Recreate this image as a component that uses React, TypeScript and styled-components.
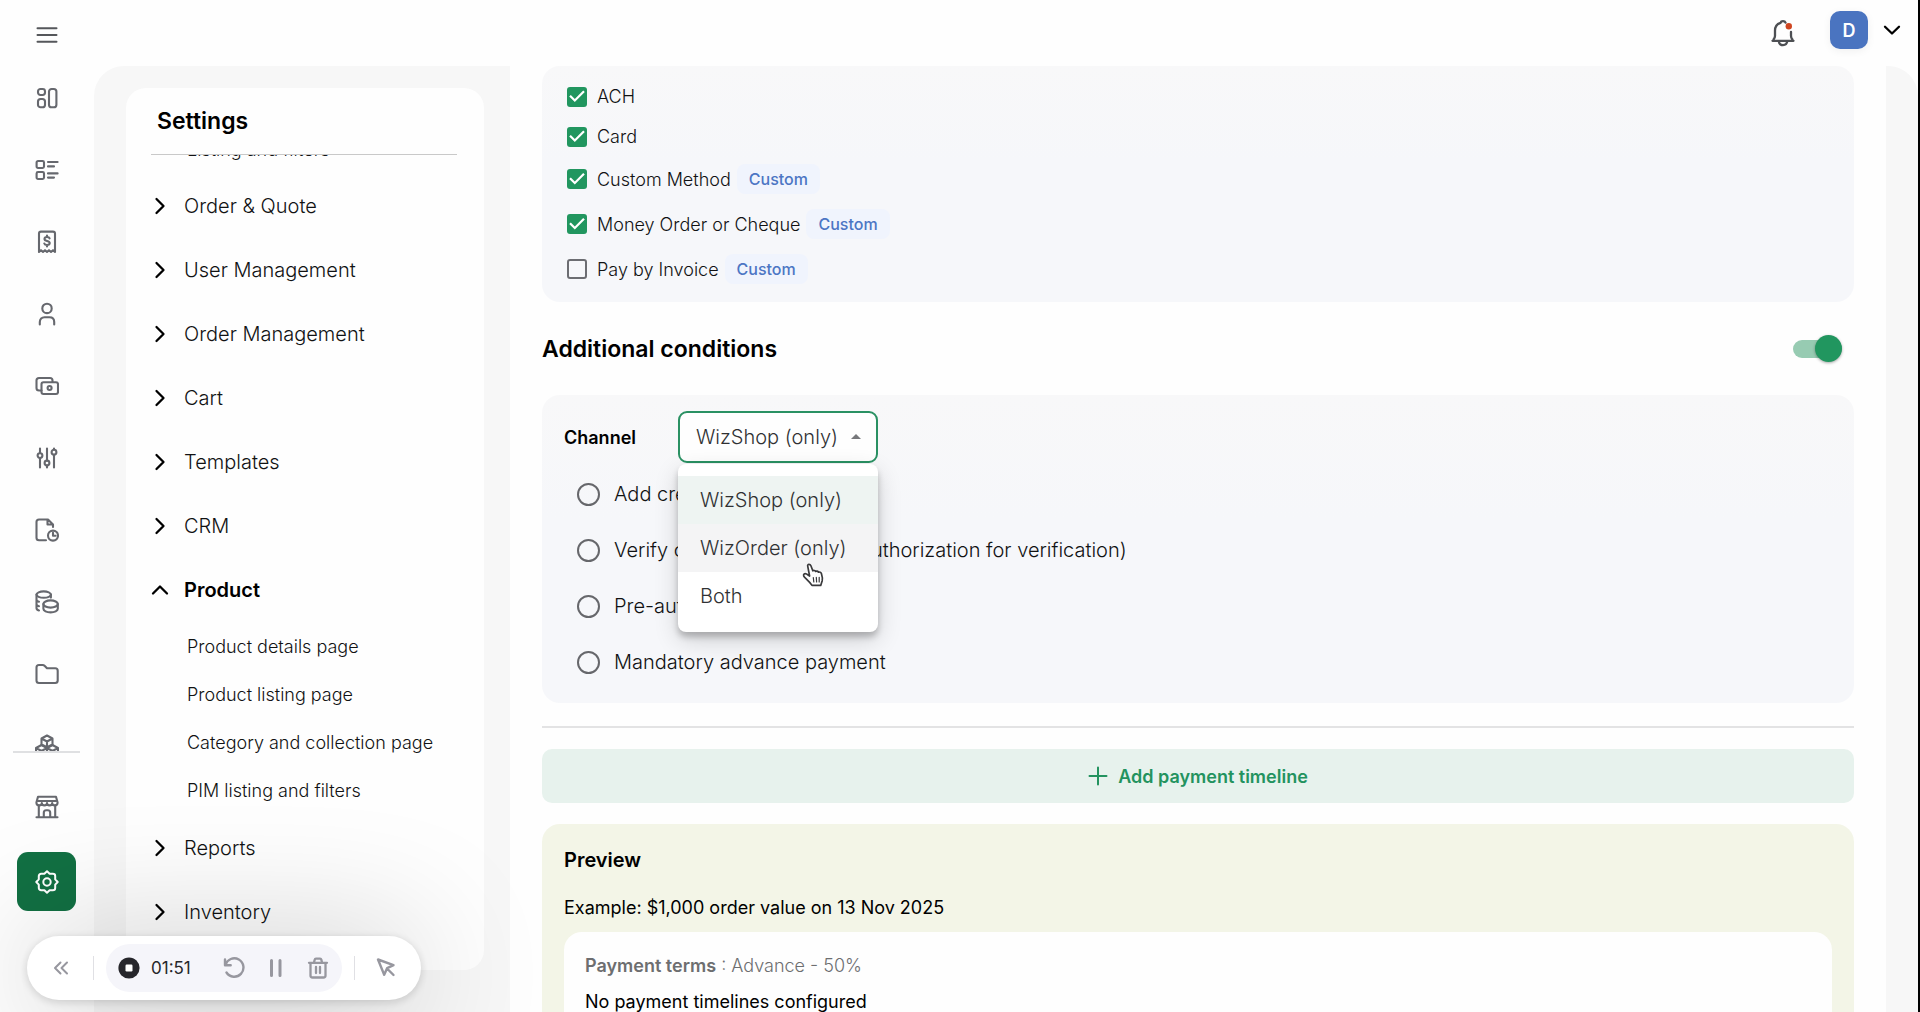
import React, { useLayoutEffect, useRef, useState } from "react";
import styled, { createGlobalStyle, css } from "styled-components";

const ink = "#111213";
const green = "#21965f";
const iconGrey = "#66686e";

const GlobalStyle = createGlobalStyle`
  *, *::before, *::after { box-sizing: border-box; }
  body {
    margin: 0;
    background: #fff;
    color: ${ink};
    font-family: Inter, "Liberation Sans", sans-serif;
    font-weight: 300;
    font-size: 18px;
  }
  button, select, input { font: inherit; color: inherit; }
  button { border: 0; padding: 0; background: none; cursor: pointer; }
  ul { list-style: none; margin: 0; padding: 0; }
  h1, h2, h3, p { margin: 0; }
`;

const Shell = styled.div`
  display: grid;
  grid-template-columns: 94px minmax(0, 1fr);
  height: 100vh;
  overflow: hidden;
  border-right: 2px solid #000;
  background: #fefefe;
`;

/* ---------- icon rail ---------- */

const Rail = styled.nav`
  display: flex;
  flex-direction: column;
  align-items: center;
  min-height: 0;
  padding-right: 1px;
`;

const RailButton = styled.button<{ $height: number }>`
  display: flex;
  flex: none;
  align-items: center;
  justify-content: center;
  width: 59px;
  height: ${(p) => p.$height}px;
  color: ${iconGrey};
`;

const MenuButton = styled(RailButton)`
  padding-top: 8px;
  color: #55575b;
`;

const RailList = styled.div`
  display: flex;
  flex-direction: column;
  flex: 1;
  min-height: 0;
  overflow: hidden;
`;

const RailFooter = styled.div`
  display: flex;
  flex-direction: column;
  align-items: center;
  gap: 9px;
  width: 67px;
  padding: 18px 0 101px;
  border-top: 2px solid #dfe0e2;
`;

const ActiveRailButton = styled(RailButton)`
  border-radius: 11px;
  background: #127043;
  color: #fff;
`;

/* ---------- top bar ---------- */

const Column = styled.div`
  display: flex;
  flex-direction: column;
  min-width: 0;
  min-height: 0;
`;

const TopBar = styled.header`
  display: flex;
  flex: none;
  align-items: center;
  justify-content: flex-end;
  height: 66px;
  padding: 0 16px 6px 0;
`;

const BellButton = styled.button`
  display: flex;
  margin-right: 32px;
  padding-top: 7px;
  color: #4d4f53;
`;

const Avatar = styled.span`
  display: grid;
  place-items: center;
  width: 38px;
  height: 38px;
  border-radius: 10px;
  background: #4a74c0;
  color: #fff;
  font-size: 18px;
  font-weight: 600;
  box-shadow: 0 2px 8px rgba(0, 0, 0, 0.06);
`;

const ProfileButton = styled.button`
  display: flex;
  align-items: center;
  gap: 14px;
  color: #000;
`;

const Workspace = styled.div`
  display: grid;
  grid-template-columns: 416px minmax(0, 1fr);
  flex: 1;
  min-height: 0;
  padding-right: 32px;
  border-radius: 30px 30px 0 0;
  overflow: hidden;
  background: #f7f7f7;
`;

/* ---------- settings panel ---------- */

const Panel = styled.aside`
  display: flex;
  flex-direction: column;
  min-height: 0;
  margin: 22px 26px 42px 32px;
  padding: 0 27px 0 25px;
  border-radius: 20px;
  background: #fefefe;
`;

const PanelTitle = styled.h1`
  flex: none;
  height: 67px;
  padding: 0 6px;
  border-bottom: 1px solid #c9c9c9;
  color: #000;
  font-size: 23px;
  font-weight: 600;
  line-height: 66px;
`;

const PanelScroll = styled.div`
  flex: 1;
  min-height: 0;
  overflow: hidden;
`;

const GroupList = styled.ul`
  padding-bottom: 96px;
`;

const GroupButton = styled.button<{ $open?: boolean }>`
  display: flex;
  align-items: center;
  gap: 15px;
  width: 100%;
  height: 64px;
  text-align: left;
  font-size: 20px;
  font-weight: ${(p) => (p.$open ? 600 : 300)};
  color: ${(p) => (p.$open ? "#000" : ink)};

  svg { flex: none; color: #000; }
`;

const SubList = styled.ul<{ $padded?: boolean }>`
  padding: ${(p) => (p.$padded ? "1px 0" : "0")};
`;

const SubLink = styled.a`
  display: block;
  padding-left: 36px;
  color: ${ink};
  font-size: 18px;
  line-height: 48px;
  text-decoration: none;
  white-space: nowrap;
`;

/* ---------- main content ---------- */

const Content = styled.main`
  min-width: 0;
  padding: 0 32px;
  overflow: hidden;
  background: #fefefe;
`;

const card = css`
  border-radius: 18px;
  background: linear-gradient(#f8f8f9, #f6f7fa 40%);
`;

const MethodCard = styled.section`
  ${card}
  display: flex;
  flex-direction: column;
  gap: 15px;
  padding: 18px 24px;
`;

const Method = styled.label<{ $tall: boolean }>`
  display: flex;
  align-items: center;
  height: ${(p) => (p.$tall ? 30 : 25)}px;
  font-size: 18px;
`;

const CheckBox = styled.input`
  appearance: none;
  flex: none;
  width: 20px;
  height: 20px;
  margin: 0 10px 0 1px;
  border: 2px solid #6c6d72;
  border-radius: 3px;

  &:checked {
    border: 0;
    background: ${green};
  }
  &:checked::after {
    content: "";
    display: block;
    width: 20px;
    height: 20px;
    background: #fff;
    clip-path: polygon(39% 78%, 11% 50%, 19% 42%, 39% 62%, 81% 20%, 89% 28%);
  }
`;

const Chip = styled.span`
  margin-left: 6px;
  padding: 0 12px;
  border-radius: 8px;
  background: #f0f4fd;
  color: #4c76c4;
  font-size: 16px;
  font-weight: 500;
  line-height: 30px;
`;

const SectionHead = styled.label`
  display: flex;
  align-items: center;
  justify-content: space-between;
  height: 93px;
  padding-right: 12px;
`;

const SectionTitle = styled.h2`
  color: #000;
  font-size: 23px;
  font-weight: 600;
`;

const Switch = styled.input`
  appearance: none;
  display: flex;
  align-items: center;
  justify-content: flex-end;
  width: 49px;
  height: 18px;
  margin: 0;
  border-radius: 9px;
  background: #97cbb2;

  &::after {
    content: "";
    flex: none;
    width: 27px;
    height: 27px;
    border-radius: 50%;
    background: ${green};
    box-shadow: 0 1px 3px rgba(0, 0, 0, 0.35);
  }
  &:not(:checked) { justify-content: flex-start; }
`;

const ConditionCard = styled.section`
  ${card}
  padding: 16px 22px 13px;
`;

const ChannelRow = styled.div`
  display: flex;
  align-items: center;
  margin-bottom: 3px;
`;

const ChannelLabel = styled.label`
  width: 114px;
  color: #000;
  font-size: 18px;
  font-weight: 600;
`;

const SelectBox = styled.div`
  position: relative;
  width: 200px;

  &::after {
    content: "";
    position: absolute;
    top: 23px;
    right: 17px;
    border: 5px solid transparent;
    border-top: 0;
    border-bottom-color: #77787b;
    pointer-events: none;
  }
`;

const Select = styled.select`
  appearance: none;
  display: block;
  width: 100%;
  height: 52px;
  padding: 0 32px 0 16px;
  border: 2px solid #2a9163;
  border-radius: 9px;
  outline: 0;
  background: #fefefe;
  color: #303133;
  font-size: 20px;
`;

const Menu = styled.ul`
  position: absolute;
  z-index: 2;
  top: 53px;
  left: 0;
  width: 100%;
  padding: 12px 0;
  border-radius: 8px;
  background: #fff;
  box-shadow: 0 5px 6px rgba(0, 0, 0, 0.22), 0 8px 24px rgba(0, 0, 0, 0.16);
`;

const MenuItem = styled.li<{ $tone: string }>`
  padding-left: 22px;
  background: ${(p) => p.$tone};
  color: #303133;
  font-size: 20px;
  line-height: 48px;
`;

const Pointer = styled.svg`
  position: absolute;
  z-index: 3;
  top: 152px;
  left: 124px;
`;

const Condition = styled.label`
  display: flex;
  align-items: center;
  gap: 14px;
  height: 56px;
  padding-left: 13px;
  font-size: 20px;
  white-space: nowrap;
`;

const Radio = styled.input`
  appearance: none;
  flex: none;
  width: 23px;
  height: 23px;
  margin: 0;
  border: 2px solid #66676b;
  border-radius: 50%;
`;

const Rule = styled.hr`
  height: 2px;
  margin: 23px 0 21px;
  border: 0;
  background: #e3e3e4;
`;

const AddButton = styled.button`
  display: flex;
  align-items: center;
  justify-content: center;
  gap: 10px;
  width: 100%;
  height: 54px;
  border-radius: 10px;
  background: #e7f2ed;
  color: #23935f;
  font-size: 18px;
  font-weight: 600;
`;

const Preview = styled.section`
  margin-top: 21px;
  padding: 21px 22px;
  border-radius: 18px;
  background: #f3f5e7;
  line-height: 30px;
`;

const PreviewTitle = styled.h3`
  color: #000;
  font-size: 20px;
  font-weight: 600;
`;

const Example = styled.p`
  margin: 18px 0 9px;
  color: #000;
  font-size: 18px;
  font-weight: 400;
`;

const TermsCard = styled.div`
  display: flex;
  flex-direction: column;
  gap: 6px;
  padding: 19px 21px;
  border-radius: 18px;
  background: #fefefe;
`;

const Terms = styled.p`
  color: #6d6e70;
  font-size: 18px;

  b { font-weight: 600; }
`;

const Empty = styled.p`
  color: #000;
  font-size: 18px;
  font-weight: 400;
`;

/* ---------- screen recorder ---------- */

const Recorder = styled.div`
  position: fixed;
  z-index: 5;
  left: 27px;
  bottom: 12px;
  display: flex;
  align-items: center;
  height: 64px;
  padding: 0 23px 0 22px;
  border-radius: 32px;
  background: #fff;
  box-shadow: 0 2px 10px rgba(0, 0, 0, 0.16), 0 6px 130px rgba(0, 0, 0, 0.26);
`;

const RecorderButton = styled.button`
  display: grid;
  place-items: center;
  width: 24px;
  height: 24px;
  color: #97979f;
`;

const Divider = styled.span<{ $before: number; $after: number }>`
  width: 1px;
  height: 24px;
  margin: 0 ${(p) => p.$after}px 0 ${(p) => p.$before}px;
  background: #e0e0e4;
`;

const RecorderPill = styled.div`
  display: flex;
  align-items: center;
  gap: 18px;
  width: 236px;
  height: 48px;
  padding: 0 12px;
  border-radius: 24px;
  background: #f5f5fa;
`;

const StopButton = styled.button`
  display: flex;
  align-items: center;
  gap: 11px;
  margin-right: auto;
  color: #26262b;
  font-size: 17px;
  font-weight: 400;
`;

/* ---------- icons ---------- */

const Icon = ({ size = 24, width = 2, children }: { size?: number; width?: number; children: React.ReactNode }) => (
  <svg width={size} height={size} viewBox="0 0 24 24" fill="none" stroke="currentColor"
    strokeWidth={width} strokeLinecap="round" strokeLinejoin="round" aria-hidden="true">
    {children}
  </svg>
);

const railIcons: { name: string; art: React.ReactNode }[] = [
  { name: "Dashboard", art: <>
    <rect x="3" y="3" width="7" height="6" rx="2.4" /><rect x="3" y="13" width="7" height="8.3" rx="2.6" />
    <rect x="14" y="3" width="7.4" height="18.3" rx="2.6" /></> },
  { name: "Orders", art: <>
    <rect x="1.6" y="3" width="7.4" height="7" rx="1.4" /><rect x="1.6" y="14" width="7.4" height="7" rx="1.4" />
    <path d="M13 4h9.6M13 8.4h6M13 15.4h9.6M13 19.6h6" /></> },
  { name: "Invoices", art: <>
    <path d="M4 22V3.6C4 2.4 4.6 1.6 6 1.6h12c1.400 0 2 .8 2 2V22l-2-1.800-2 1.800-2-1.800-2 1.800-2-1.800-2 1.800-2-1.800z" />
    <path d="M14.600 8.400c-.3-1-1.300-1.400-2.600-1.400s-2.500.6-2.500 1.900c0 2.800 5.200 1.300 5.200 4.100 0 1.300-1.200 2-2.700 2s-2.400-.6-2.700-1.500M12 5.600V7M12 15v1.400" /></> },
  { name: "Customers", art: <>
    <circle cx="12" cy="6.400" r="4.700" /><path d="M4.800 22.400V20c0-3 2-4.800 4.700-4.800h5c2.700 0 4.700 1.800 4.700 4.800v2.400" /></> },
  { name: "Payments", art: <>
    <path d="M6.500 16.500H4a2.500 2.500 0 0 1-2.500-2.500V6.500A2.500 2.500 0 0 1 4 4h11a2.500 2.500 0 0 1 2.500 2.500V8" />
    <rect x="6.500" y="8.200" width="16.500" height="11.800" rx="2" /><circle cx="14.600" cy="14" r="2" /></> },
  { name: "Controls", art: <>
    <path d="M5 2.500V7M5 12.500v9M12 2.500v12M12 20v1.500M19 2.500V3.500M19 9v12.500" />
    <circle cx="5" cy="9.600" r="2.400" /><circle cx="12" cy="17" r="2.400" /><circle cx="19" cy="6.200" r="2.400" /></> },
  { name: "Reports", art: <>
    <path d="M11 22.300H4c-1.500 0-2.500-1-2.500-2.500V4c0-1.500 1-2.500 2.500-2.500h9l5 5V9M12.500 2v4.500h5" />
    <circle cx="18" cy="17.600" r="5" /><path d="M18 14.800v3h2.600" /></> },
  { name: "Pricing", art: <>
    <ellipse cx="8.700" cy="4.600" rx="7.200" ry="3.200" /><path d="M1.500 4.600V18c0 1.300.8 2 2.500 2.500M1.500 9.500c0 1 .8 1.700 2.500 2.200M1.500 14c0 1 .8 1.700 2.500 2.200M15.900 4.600v3" />
    <ellipse cx="15.600" cy="14" rx="7.200" ry="3.600" /><path d="M8.400 14v4.800c0 2 3.200 3.600 7.200 3.600s7.200-1.600 7.200-3.600V14" /></> },
  { name: "Files", art: <path d="M1.500 5.500c0-1.500 1-2.500 2.500-2.500h3.600c1 0 1.500.3 2.200 1l2.200 2.300h8.200c1.500 0 2.500 1 2.500 2.500v9.700c0 1.500-1 2.500-2.500 2.500H4c-1.500 0-2.500-1-2.500-2.500z" /> },
  { name: "Inventory", art: <>
    <path d="M12 1.500l5.500 3v6L12 13.300l-5.500-2.800v-6zM6.500 4.500L12 7.500l5.500-3M12 7.500v5.800" />
    <path d="M6.500 11l5.500 3v6L6.500 23 1 20v-6zM1 14l5.500 3 5.500-3M6.500 17v6" />
    <path d="M17.500 11l5.500 3v6l-5.500 3-5.500-3v-6zM12 14l5.500 3 5.500-3M17.500 17v6" /></> },
];

const Chevron = ({ turn }: { turn: number }) => (
  <svg width="18" height="18" viewBox="0 0 18 18" fill="none" stroke="currentColor" strokeWidth="2.300"
    strokeLinecap="round" strokeLinejoin="round" aria-hidden="true">
    <g transform={`rotate(${turn} 9 9)`}><path d="M5.500 2l7 7-7 7" /></g>
  </svg>
);

/* ---------- data ---------- */

const methods = [
  { name: "ACH", on: true, custom: false },
  { name: "Card", on: true, custom: false },
  { name: "Custom Method", on: true, custom: true },
  { name: "Money Order or Cheque", on: true, custom: true },
  { name: "Pay by Invoice", on: false, custom: true },
];

const channels = [
  { name: "WizShop (only)", tone: "#eef4f2" },
  { name: "WizOrder (only)", tone: "#f4f4f5" },
  { name: "Both", tone: "transparent" },
];

const conditions = [
  "Add credit card",
  "Verify customer card (pre-authorization for verification)",
  "Pre-authorize",
  "Mandatory advance payment",
];

const groups: { name: string; items?: string[] }[] = [
  { name: "Order & Quote" },
  { name: "User Management" },
  { name: "Order Management" },
  { name: "Cart" },
  { name: "Templates" },
  { name: "CRM" },
  { name: "Product", items: ["Product details page", "Product listing page", "Category and collection page", "PIM listing and filters"] },
  { name: "Reports" },
  { name: "Inventory" },
];

function SettingsPanel() {
  const scroller = useRef<HTMLDivElement>(null);
  useLayoutEffect(() => {
    if (scroller.current) scroller.current.scrollTop = 29;
  }, []);
  return (
    <Panel>
      <PanelTitle>Settings</PanelTitle>
      <PanelScroll ref={scroller}>
        <GroupList>
          <li>
            <SubList><li><SubLink href="#">Listing and filters</SubLink></li></SubList>
          </li>
          {groups.map((g) => (
            <li key={g.name}>
              <GroupButton $open={!!g.items} aria-expanded={!!g.items}>
                <Chevron turn={g.items ? -90 : 0} />
                {g.name}
              </GroupButton>
              {g.items && (
                <SubList $padded>
                  {g.items.map((i) => <li key={i}><SubLink href="#">{i}</SubLink></li>)}
                </SubList>
              )}
            </li>
          ))}
        </GroupList>
      </PanelScroll>
    </Panel>
  );
}

export default function App() {
  const [channel, setChannel] = useState(channels[0].name);
  return (
    <>
      <GlobalStyle />
      <Shell>
        <Rail>
          <MenuButton $height={62} aria-label="Menu">
            <Icon><path d="M2.500 5.300h19M2.500 12h19M2.500 18.700h19" /></Icon>
          </MenuButton>
          <RailList>
            {railIcons.map((r) => (
              <RailButton key={r.name} $height={72} aria-label={r.name}><Icon width={2.1}>{r.art}</Icon></RailButton>
            ))}
          </RailList>
          <RailFooter>
            <RailButton $height={72} aria-label="Store">
              <Icon width={2.1}>
                <path d="M3 1.800h18l1.600 5.700c0 1.700-1.200 2.900-2.800 2.900-1.500 0-2.600-1.200-2.600-2.400 0 1.200-1.100 2.400-2.600 2.400S12 9.200 12 8c0 1.200-1.100 2.400-2.600 2.400S6.800 9.200 6.800 8c0 1.200-1.100 2.400-2.600 2.400-1.600 0-2.800-1.200-2.800-2.900zM2.500 6h19" />
                <path d="M3.800 10.600V22M20.200 10.600V22M1.500 22.300h21M8.800 22v-4.300c0-1.500 1-2.500 2.400-2.500h1.600c1.400 0 2.400 1 2.400 2.500V22" />
              </Icon>
            </RailButton>
            <ActiveRailButton $height={59} aria-label="Settings">
              <Icon width={2}>
                <path d="M12 1.300l2.600 2.500h3.300c1.300 0 2.300 1 2.300 2.300v3.300L22.700 12l-2.500 2.600v3.300c0 1.300-1 2.300-2.300 2.300h-3.300L12 22.700l-2.600-2.500H6.100c-1.300 0-2.300-1-2.300-2.300v-3.300L1.300 12l2.500-2.600V6.100c0-1.300 1-2.300 2.300-2.300h3.300z" />
                <circle cx="12" cy="12" r="3.700" />
              </Icon>
            </ActiveRailButton>
          </RailFooter>
        </Rail>

        <Column>
          <TopBar>
            <BellButton aria-label="Notifications">
              <svg width="30" height="30" viewBox="0 0 30 30" fill="none" stroke="currentColor" strokeWidth="2.300"
                strokeLinecap="round" strokeLinejoin="round" aria-hidden="true">
                <path d="M17.500 3.600c-.3-.8-1.300-1.400-2.500-1.400s-2.200.6-2.500 1.600c-3.600 1.200-5.500 4.200-5.500 7.800V17c0 1.400-.6 2.400-1.500 3.400v1.400M4.500 21.800h21M23 13v4c0 1.400.5 2.600 1.500 3.600v1.200" />
                <path d="M10.700 22.200c.3 2.300 2 3.900 4.300 3.900s4-1.600 4.300-3.900" />
                <circle cx="20.800" cy="7.300" r="3.200" fill="#cf4520" stroke="none" />
              </svg>
            </BellButton>
            <ProfileButton aria-label="Account">
              <Avatar>D</Avatar>
              <svg width="20" height="20" viewBox="0 0 20 20" fill="none" stroke="currentColor" strokeWidth="2.300"
                strokeLinecap="round" strokeLinejoin="round" aria-hidden="true"><path d="M3 6.700l7 6.800 7-6.800" /></svg>
            </ProfileButton>
          </TopBar>

          <Workspace>
            <SettingsPanel />
            <Content>
              <MethodCard aria-label="Payment methods">
                {methods.map((m) => (
                  <Method key={m.name} $tall={m.custom}>
                    <CheckBox type="checkbox" defaultChecked={m.on} />
                    {m.name}
                    {m.custom && <Chip>Custom</Chip>}
                  </Method>
                ))}
              </MethodCard>

              <SectionHead>
                <SectionTitle>Additional conditions</SectionTitle>
                <Switch type="checkbox" role="switch" defaultChecked />
              </SectionHead>

              <ConditionCard>
                <ChannelRow>
                  <ChannelLabel htmlFor="channel">Channel</ChannelLabel>
                  <SelectBox>
                    <Select id="channel" value={channel} onChange={(e) => setChannel(e.target.value)}>
                      {channels.map((c) => <option key={c.name}>{c.name}</option>)}
                    </Select>
                    <Menu role="listbox" aria-label="Channel">
                      {channels.map((c) => (
                        <MenuItem key={c.name} role="option" aria-selected={c.name === channel} $tone={c.tone}
                          onClick={() => setChannel(c.name)}>{c.name}</MenuItem>
                      ))}
                    </Menu>
                    <Pointer width="24" height="26" viewBox="0 0 24 26" fill="#fff" stroke="#3a3a3c" strokeWidth="1.700"
                      strokeLinejoin="round" strokeLinecap="round" aria-hidden="true">
                      <path d="M5.800 3.600c-.5-1.500.3-2.300 1.200-2.300s1.500.5 1.900 1.500l1.900 5c.8-.6 2.300-.4 2.800.6 1-.6 2.300-.3 2.800.8 1.200-.5 2.600.1 3 1.400.7 2.300 1.500 4.800.8 7.200l-1.500 4.600H10c-1.500-2.600-3.800-4.700-6-6.800-2.300-2-3-3.400-2-4.400s2.700-.3 4.100.8l1.500 1z" />
                      <path d="M11.300 14.500l.5 4.500M14.300 14.300l.3 4.700M17.200 14.300v4.700" strokeWidth="1.200" />
                    </Pointer>
                  </SelectBox>
                </ChannelRow>
                {conditions.map((c) => (
                  <Condition key={c}><Radio type="radio" name="condition" />{c}</Condition>
                ))}
              </ConditionCard>

              <Rule />

              <AddButton>
                <svg width="20" height="20" viewBox="0 0 20 20" fill="none" stroke="currentColor" strokeWidth="2"
                  strokeLinecap="round" aria-hidden="true"><path d="M10 1.500v17M1.500 10h17" /></svg>
                Add payment timeline
              </AddButton>

              <Preview>
                <PreviewTitle>Preview</PreviewTitle>
                <Example>Example: $1,000 order value on 13 Nov 2025</Example>
                <TermsCard>
                  <Terms><b>Payment terms</b> : Advance - 50%</Terms>
                  <Empty>No payment timelines configured</Empty>
                </TermsCard>
              </Preview>
            </Content>
          </Workspace>
        </Column>
      </Shell>

      <Recorder>
        <RecorderButton aria-label="Collapse">
          <Icon width={2}><path d="M11.500 6.500L6 12l5.500 5.500M18 6.500L12.500 12l5.500 5.500" /></Icon>
        </RecorderButton>
        <Divider $before={20} $after={12} />
        <RecorderPill>
          <StopButton aria-label="Stop recording">
            <svg width="22" height="22" viewBox="0 0 22 22" aria-hidden="true">
              <circle cx="11" cy="11" r="10.600" fill="#26262b" /><rect x="7.500" y="7.500" width="7" height="7" rx="1.200" fill="#fff" />
            </svg>
            01:51
          </StopButton>
          <RecorderButton aria-label="Restart">
            <Icon width={2.4}><path d="M3 3.500v5.700h5.700M3.400 9A9.200 9.200 0 1 1 4.500 16.500" /></Icon>
          </RecorderButton>
          <RecorderButton aria-label="Pause">
            <Icon width={3}><path d="M7.500 4.500v15M16 4.500v15" /></Icon>
          </RecorderButton>
          <RecorderButton aria-label="Delete">
            <Icon width={2.3}><path d="M4.500 7v12.500c0 1.300.8 2 2 2h11c1.200 0 2-.7 2-2V7M3 6.800h18M8 6.500l.6-2.600c.2-.8.6-1.200 1.400-1.200h4c.8 0 1.200.4 1.400 1.200l.6 2.600M10 11v6M14 11v6" /></Icon>
          </RecorderButton>
        </RecorderPill>
        <Divider $before={12} $after={19} />
        <RecorderButton aria-label="Pointer">
          <Icon width={2.4}><path d="M4 3.500l15.500 5.600-6.300 3-3 6.700zM13.500 13l6 6" /></Icon>
        </RecorderButton>
      </Recorder>
    </>
  );
}
